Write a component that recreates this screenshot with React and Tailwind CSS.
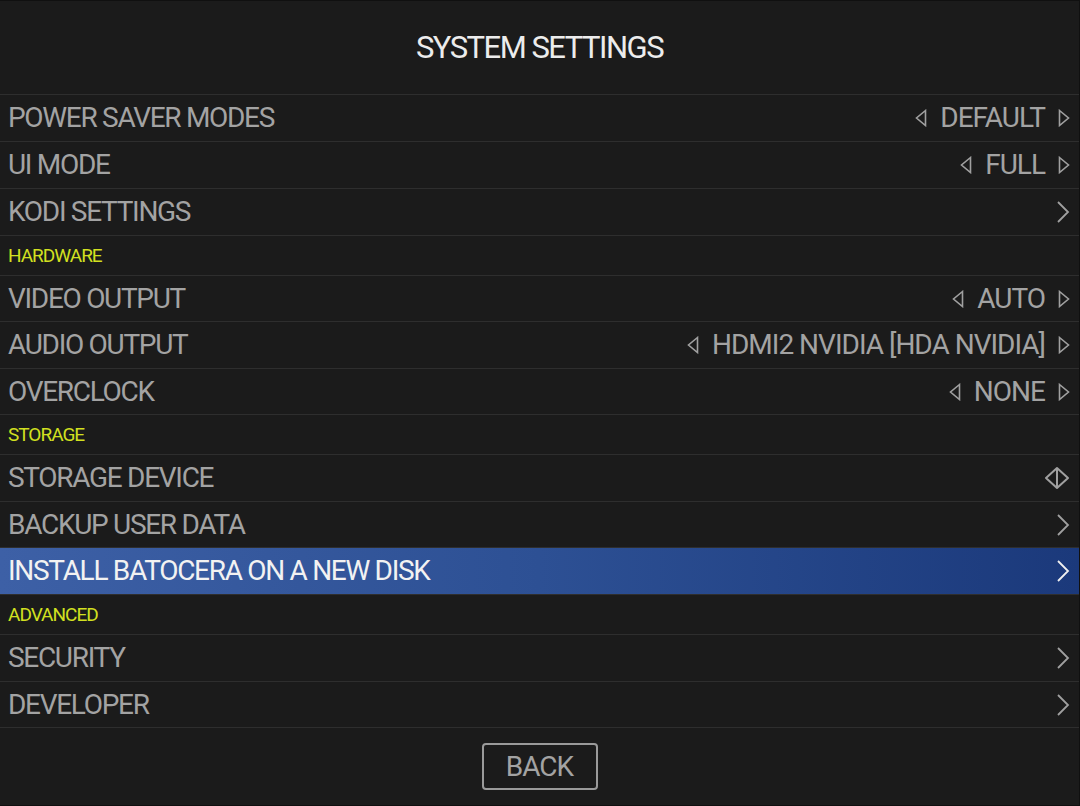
import React from "react";

const FONT = { fontFamily: "Roboto, 'Open Sans', sans-serif" };

function TriLeft() {
  return (
    <svg width="12" height="18" viewBox="0 0 12 18" className="shrink-0">
      <path d="M10.5 1.5 L1.5 9 L10.5 16.5 Z" fill="none" stroke="#a0a0a0" strokeWidth="1.6" strokeLinejoin="miter" />
    </svg>
  );
}
function TriRight() {
  return (
    <svg width="12" height="18" viewBox="0 0 12 18" className="shrink-0">
      <path d="M1.5 1.5 L10.5 9 L1.5 16.5 Z" fill="none" stroke="#a0a0a0" strokeWidth="1.6" strokeLinejoin="miter" />
    </svg>
  );
}
function Chevron({ color = "#a0a0a0" }) {
  return (
    <svg width="14" height="24" viewBox="0 0 14 24" className="shrink-0">
      <path d="M2 2 L12 12 L2 22" fill="none" stroke={color} strokeWidth="1.8" />
    </svg>
  );
}
function Diamond() {
  return (
    <svg width="26" height="24" viewBox="0 0 26 24" className="shrink-0">
      <path d="M13 2 L24 12 L13 22 L2 12 Z" fill="none" stroke="#a0a0a0" strokeWidth="2" strokeLinejoin="round" />
      <path d="M13 2 L13 22" stroke="#a0a0a0" strokeWidth="2" />
    </svg>
  );
}

function Item({ label, value, kind, selected, short }) {
  return (
    <div
      className={
        (short ? "h-[46px] " : "h-[47px] ") +
        "flex items-center justify-between pl-[8px] pr-[9px] border-t border-[#2e2e2e] " +
        (selected ? "bg-gradient-to-r from-[#3d60a6] via-[#2d5094] to-[#1b397b]" : "")
      }
    >
      <span className={"text-[28px] tracking-[-1.3px] leading-none " + (selected ? "text-[#f2f2f2]" : "text-[#a3a3a3]")}>
        {label}
      </span>
      {kind === "select" && (
        <div className="flex items-center gap-[13px]">
          <TriLeft />
          <span className="text-[28px] tracking-[-1px] leading-none text-[#a3a3a3]">{value}</span>
          <TriRight />
        </div>
      )}
      {kind === "chevron" && <Chevron color={selected ? "#f0f0f0" : "#a0a0a0"} />}
      {kind === "diamond" && <Diamond />}
    </div>
  );
}

function Section({ label }) {
  return (
    <div className="h-[40px] flex items-center pl-[8px] border-t border-[#2e2e2e]">
      <span className="text-[19px] tracking-[-1px] leading-none text-[#d2e020]">{label}</span>
    </div>
  );
}

export default function App() {
  return (
    <div style={FONT} className="w-[1080px] h-[806px] bg-[#1b1b1b] flex flex-col border-t border-b border-r border-[#101010] overflow-hidden">
      <div className="h-[93px] flex items-center justify-center">
        <span className="text-[31px] tracking-[-1.5px] leading-none text-[#ececec]">SYSTEM SETTINGS</span>
      </div>
      <Item label="POWER SAVER MODES" value="DEFAULT" kind="select" />
      <Item label="UI MODE" value="FULL" kind="select" />
      <Item label="KODI SETTINGS" kind="chevron" />
      <Section label="HARDWARE" />
      <Item label="VIDEO OUTPUT" value="AUTO" kind="select" short />
      <Item label="AUDIO OUTPUT" value="HDMI2 NVIDIA [HDA NVIDIA]" kind="select" />
      <Item label="OVERCLOCK" value="NONE" kind="select" short />
      <Section label="STORAGE" />
      <Item label="STORAGE DEVICE" kind="diamond" />
      <Item label="BACKUP USER DATA" kind="chevron" short />
      <Item label="INSTALL BATOCERA ON A NEW DISK" kind="chevron" selected />
      <Section label="ADVANCED" />
      <Item label="SECURITY" kind="chevron" />
      <Item label="DEVELOPER" kind="chevron" short />
      <div className="border-t border-[#2e2e2e] flex-1 flex items-start justify-center pt-[15px]">
        <div className="w-[116px] h-[47px] border-2 border-[#9a9a9a] rounded-[4px] flex items-center justify-center">
          <span className="text-[28px] tracking-[-1px] leading-none text-[#a3a3a3]">BACK</span>
        </div>
      </div>
    </div>
  );
}
